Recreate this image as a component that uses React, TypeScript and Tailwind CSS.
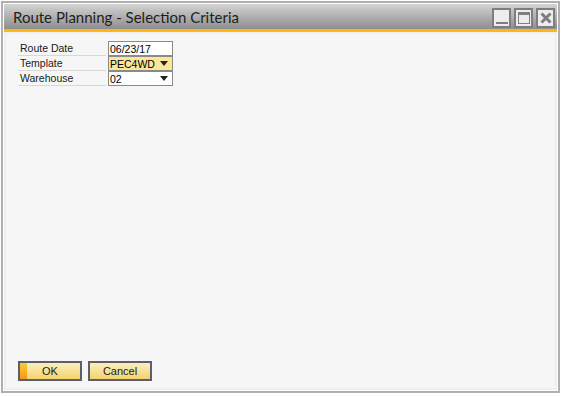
import React from "react";

const font = { fontFamily: "'Liberation Sans', Arial, sans-serif" };

function Row({ label, value, bg, dropdown }: { label: string; value: string; bg: string; dropdown?: boolean }) {
  return (
    <div className="flex h-[15px] items-stretch">
      <div className="w-[88px] border-b border-[#d8d8d8] pl-[2px] text-[10.5px] leading-[14px] text-[#1a1a1a]">{label}</div>
      <div className="w-[2px]" />
      <div className={`flex w-[65px] items-center justify-between border border-[#8a8a8a] ${bg} pl-[1px] pr-[4px] text-[10.5px] leading-[12px] text-black`}>
        <span>{value}</span>
        {dropdown && (
          <svg width="8" height="5" viewBox="0 0 8 5"><path d="M0 0h8L4 5z" fill="#222" /></svg>
        )}
      </div>
    </div>
  );
}

function TitleBtn({ children }: { children: React.ReactNode }) {
  return (
    <div className="flex h-[20px] w-[19px] items-center justify-center border-2 border-[#7e7e7e] bg-[#ededed]">{children}</div>
  );
}

export default function App() {
  return (
    <div className="h-[396px] w-[563px] bg-white p-[1px]" style={font}>
      <div className="flex h-[392px] w-[559px] flex-col border-2 border-[#b0b0b0] bg-white p-[1px]">
        <div className="flex h-[25px] items-center justify-between bg-gradient-to-b from-[#d4d4d4] to-[#8e8e8e] pl-[9px] pr-[2px]">
          <span className="text-[15px] leading-[20px] text-[#1e1e1e]" style={{ fontFamily: "Lato, 'Noto Sans', sans-serif" }}>
            Route Planning - Selection Criteria
          </span>
          <div className="flex gap-[3px] pt-[2px]">
            <TitleBtn>
              <div className="mt-[10px] h-[2px] w-[12px] bg-[#7e7e7e]" />
            </TitleBtn>
            <TitleBtn>
              <div className="h-[12px] w-[12px] border border-t-[3px] border-[#7e7e7e]" />
            </TitleBtn>
            <TitleBtn>
              <svg width="12" height="12" viewBox="0 0 12 12">
                <path d="M1.5 1.5l9 9M10.5 1.5l-9 9" stroke="#7e7e7e" strokeWidth="3" />
              </svg>
            </TitleBtn>
          </div>
        </div>
        <div className="h-[3px] bg-[#f7b912]" />
        <div className="flex flex-1 flex-col border-2 border-[#efefef] bg-[#f6f6f6] pl-[12px] pt-[7px]">
          <div className="flex flex-col">
            <Row label="Route Date" value="06/23/17" bg="bg-white" />
            <Row label="Template" value="PEC4WD" bg="bg-[#fbe79a]" dropdown />
            <Row label="Warehouse" value="02" bg="bg-white" dropdown />
          </div>
          <div className="flex-1" />
          <div className="mb-[7px] flex gap-[6px]">
            <button className="relative flex h-[20px] w-[64px] items-center justify-center overflow-hidden border-2 border-[#5c5f6a] bg-gradient-to-b from-[#fcefbd] to-[#f3d36c] text-[11px] text-[#1a1a1a]">
              <span className="absolute left-0 top-0 h-full w-[7px] bg-gradient-to-b from-[#f8ca3c] to-[#ef9a12]" />
              OK
            </button>
            <button className="flex h-[20px] w-[64px] items-center justify-center border-2 border-[#5c5f6a] bg-gradient-to-b from-[#fcefbd] to-[#f3d36c] text-[11px] text-[#1a1a1a]">
              Cancel
            </button>
          </div>
        </div>
      </div>
    </div>
  );
}
